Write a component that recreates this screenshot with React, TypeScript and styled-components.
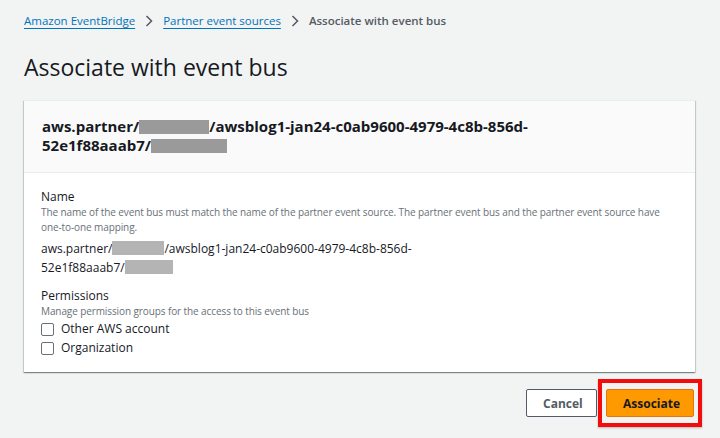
import React from "react";
import styled, { createGlobalStyle } from "styled-components";

const Global = createGlobalStyle`
  html, body { margin: 0; padding: 0; background: #f2f3f3; }
  body { font-family: "Open Sans", "Noto Sans", Arial, sans-serif; color: #16191f; }
`;

const Page = styled.div`
  width: 720px;
  height: 438px;
  box-sizing: border-box;
  padding: 12px 18px 0 24px;
  background: #f2f3f3;
  overflow: hidden;
`;

const Crumbs = styled.nav`
  display: flex;
  align-items: center;
  gap: 8px;
  font-size: 11.5px;
  height: 17px;
`;

const CrumbLink = styled.a`
  color: #0073bb;
  text-decoration: underline;
  text-underline-offset: 3px;
  text-decoration-thickness: 1px;
`;

const CrumbSep = styled.span`
  display: flex;
  color: #545b64;
  margin: 0 2px;
`;

const CrumbCurrent = styled.span`
  color: #545b64;
  font-weight: 600;
`;

const Title = styled.h1`
  margin: 22px 0 0 0;
  font-size: 23px;
  font-weight: 400;
  line-height: 32px;
  color: #16191f;
`;

const Card = styled.section`
  margin-top: 17px;
  width: 671px;
  height: 272px;
  box-sizing: border-box;
  background: #fff;
  border-top: 1px solid #eaeded;
  box-shadow: 0 1px 1px 0 rgba(0, 28, 36, 0.3), 1px 1px 1px 0 rgba(0, 28, 36, 0.15),
    -1px 1px 1px 0 rgba(0, 28, 36, 0.15);
`;

const CardHeader = styled.header`
  background: #fafafa;
  border-bottom: 1px solid #eaeded;
  height: 72px;
  box-sizing: border-box;
  padding: 16px 18px 0 18px;
  font-size: 15px;
  font-weight: 700;
  line-height: 19px;
  color: #16191f;
`;

const Redact = styled.span<{ $w: number; $tone?: string }>`
  display: inline-block;
  width: ${(p) => p.$w}px;
  height: 14px;
  vertical-align: -2px;
  background: ${(p) => p.$tone || "#9a9a9a"};
`;

const CardBody = styled.div`
  padding: 16px 18px 0 17px;
`;

const Field = styled.div`
  display: flex;
  flex-direction: column;
`;

const Label = styled.div`
  font-size: 12px;
  line-height: 16px;
  color: #16191f;
`;

const Desc = styled.div`
  font-size: 10px;
  line-height: 15px;
  color: #687078;
  letter-spacing: -0.1px;
`;

const Value = styled.div`
  margin-top: 4px;
  font-size: 12px;
  line-height: 19px;
  color: #16191f;
`;

const Perms = styled(Field)`
  margin-top: 11px;
`;

const CheckList = styled.div`
  display: flex;
  flex-direction: column;
  gap: 3px;
  margin-top: 2px;
`;

const CheckRow = styled.label`
  display: flex;
  align-items: center;
  gap: 7px;
  font-size: 12px;
  line-height: 16px;
  color: #16191f;
`;

const Box = styled.span`
  width: 11px;
  height: 11px;
  border: 1px solid #687078;
  border-radius: 2px;
  background: #fff;
`;

const Actions = styled.div`
  display: flex;
  justify-content: flex-end;
  align-items: center;
  margin-top: 7px;
  gap: 1px;
`;

const Button = styled.button<{ $primary?: boolean }>`
  height: 28px;
  box-sizing: border-box;
  padding: 0 16px;
  border-radius: 2px;
  font-family: inherit;
  font-size: 12px;
  font-weight: 700;
  cursor: pointer;
  border: 1px solid ${(p) => (p.$primary ? "#ec7211" : "#545b64")};
  background: ${(p) => (p.$primary ? "#ff9900" : "#fff")};
  color: ${(p) => (p.$primary ? "#16191f" : "#545b64")};
  width: ${(p) => (p.$primary ? "88px" : "71px")};
`;

const Highlight = styled.div`
  border: 4px solid #f20c0c;
  padding: 6px 4px;
  box-shadow: 0 1px 2px rgba(0, 0, 0, 0.25);
`;

const Chevron = () => (
  <svg width="8" height="12" viewBox="0 0 8 12" fill="none">
    <path d="M1.5 1l5 5-5 5" stroke="#545b64" strokeWidth="1.5" />
  </svg>
);

export default function App() {
  return (
    <Page>
      <Global />
      <Crumbs>
        <CrumbLink>Amazon EventBridge</CrumbLink>
        <CrumbSep>
          <Chevron />
        </CrumbSep>
        <CrumbLink>Partner event sources</CrumbLink>
        <CrumbSep>
          <Chevron />
        </CrumbSep>
        <CrumbCurrent>Associate with event bus</CrumbCurrent>
      </Crumbs>
      <Title>Associate with event bus</Title>
      <Card>
        <CardHeader>
          aws.partner/<Redact $w={70} />/awsblog1-jan24-c0ab9600-4979-4c8b-856d-
          <br />
          52e1f88aaab7/<Redact $w={76} />
        </CardHeader>
        <CardBody>
          <Field>
            <Label>Name</Label>
            <Desc>
              The name of the event bus must match the name of the partner event source. The partner event bus and the partner event source have
              <br />
              one-to-one mapping.
            </Desc>
            <Value>
              aws.partner/<Redact $w={52} $tone="#b4b4b4" />/awsblog1-jan24-c0ab9600-4979-4c8b-856d-
              <br />
              52e1f88aaab7/<Redact $w={48} $tone="#b4b4b4" />
            </Value>
          </Field>
          <Perms>
            <Label>Permissions</Label>
            <Desc>Manage permission groups for the access to this event bus</Desc>
            <CheckList>
              <CheckRow>
                <Box />
                Other AWS account
              </CheckRow>
              <CheckRow>
                <Box />
                Organization
              </CheckRow>
            </CheckList>
          </Perms>
        </CardBody>
      </Card>
      <Actions>
        <Button>Cancel</Button>
        <Highlight>
          <Button $primary>Associate</Button>
        </Highlight>
      </Actions>
    </Page>
  );
}
